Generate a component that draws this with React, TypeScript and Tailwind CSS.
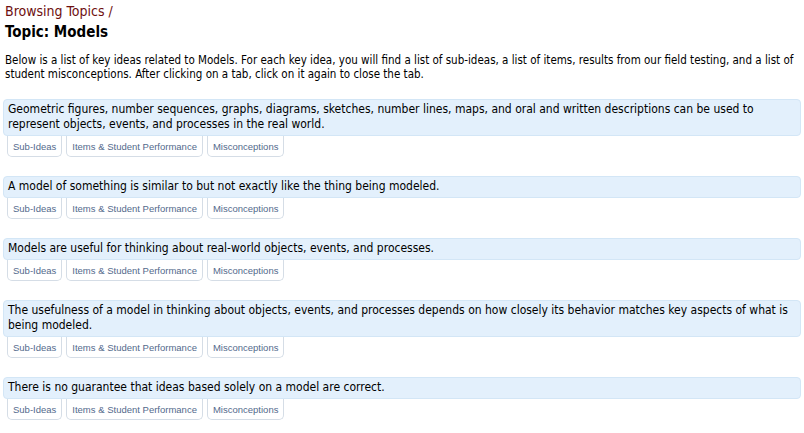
import * as React from "react"

const ideas = [
  "Geometric figures, number sequences, graphs, diagrams, sketches, number lines, maps, and oral and written descriptions can be used to represent objects, events, and processes in the real world.",
  "A model of something is similar to but not exactly like the thing being modeled.",
  "Models are useful for thinking about real-world objects, events, and processes.",
  "The usefulness of a model in thinking about objects, events, and processes depends on how closely its behavior matches key aspects of what is being modeled.",
  "There is no guarantee that ideas based solely on a model are correct.",
]

const tabs = ["Sub-Ideas", "Items & Student Performance", "Misconceptions"]

function KeyIdea({ text }: { text: string }) {
  return (
    <div className="mb-[19px]">
      <div className="rounded-[4px] border border-[#d3e6f6] bg-[#e3f0fc] px-[4px] pt-[2px] pb-[3px] text-[12px] leading-[15px] text-black">
        {text}
      </div>
      <div className="flex gap-[4px] pl-[4px]">
        {tabs.map((t) => (
          <button
            key={t}
            type="button"
            className="h-[21px] rounded-b-[5px] border border-t-0 border-[#d5dde6] bg-white px-[5px] pt-[1px] font-['Liberation_Sans',Arial,sans-serif] text-[9.5px] leading-[18px] text-[#536a8c]"
          >
            {t}
          </button>
        ))}
      </div>
    </div>
  )
}

export default function App() {
  return (
    <div className="min-h-screen bg-white px-[3px] pt-[2px] font-['DejaVu_Sans_Condensed','DejaVu_Sans',sans-serif] text-black">
      <div className="px-[2px] text-[14px] leading-[18px] text-[#6e1010]">Browsing Topics /</div>
      <h1 className="px-[2px] pt-[2px] text-[15px] font-bold leading-[20px]">Topic: Models</h1>
      <p className="px-[2px] pt-[11px] pb-[18px] text-[11.5px] leading-[14px]">
        Below is a list of key ideas related to Models. For each key idea, you will find a list of sub-ideas, a list of items, results from our field testing, and a list of student misconceptions. After clicking on a tab, click on it again to close the tab.
      </p>
      {ideas.map((t) => (
        <KeyIdea key={t} text={t} />
      ))}
    </div>
  )
}
